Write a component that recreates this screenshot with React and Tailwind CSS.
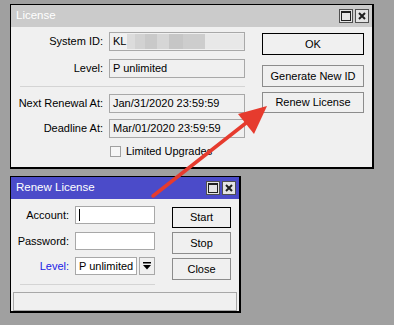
import React from 'react';

const font = { fontFamily: '"Liberation Sans", Arial, sans-serif' };

const TitleButtons = () => (
  <div className="flex gap-[2px]">
    <div className="w-[14px] h-[14px] bg-[#e4e4e4] border border-[#505050] flex items-center justify-center">
      <div className="w-[10px] h-[10px] border border-t-2 border-[#202020]" />
    </div>
    <div className="w-[14px] h-[14px] bg-[#e4e4e4] border border-[#505050] flex items-center justify-center">
      <svg width="8" height="8" viewBox="0 0 8 8">
        <path d="M1 1 L7 7 M7 1 L1 7" stroke="#202020" strokeWidth="2" />
      </svg>
    </div>
  </div>
);

const Field = ({ children, w = 'w-[136px]', h = 'h-[19px]', white }) => (
  <div className={`${w} ${h} border border-[#a8a8a8] ${white ? 'bg-white' : 'bg-[#f0f0f0]'} flex items-center px-[3px] text-[11px] text-black overflow-hidden whitespace-nowrap`}>
    {children}
  </div>
);

const Button = ({ children, def, h = 'h-[22px]', w = 'w-[102px]' }) => (
  <div className={`${w} ${h} border ${def ? 'border-black' : 'border-[#8c8c8c]'} bg-[#f0f0f0] flex items-center justify-center text-[11px] text-black`}>
    {children}
  </div>
);

const Row = ({ label, children, labelW = 'w-[98px]', blue }) => (
  <div className="flex items-center">
    <div className={`${labelW} text-right text-[11px] pr-[6px] whitespace-nowrap ${blue ? 'text-[#1a1ae6]' : 'text-black'}`}>{label}</div>
    {children}
  </div>
);

export default function App() {
  return (
    <div className="relative w-[394px] h-[325px] bg-[#a0a0a0] overflow-hidden" style={font}>
      {/* License window */}
      <div className="absolute left-[10px] top-[4px] w-[364px] h-[165px] border border-black border-r-2 border-b-2 bg-[#f0f0f0] flex flex-col">
        <div className="h-[22px] bg-[#cbcbcb] flex items-center justify-between pl-[5px] pr-[3px]">
          <span className="text-white text-[11.5px]">License</span>
          <TitleButtons />
        </div>
        <div className="flex pt-[5px]">
          <div className="flex flex-col">
            <Row label="System ID:">
              <Field>
                <span>KL</span>
                <span className="ml-[1px] flex h-[15px]">
                  <span className="w-[8px] bg-[#dcdcdc]" />
                  <span className="w-[10px] bg-[#d2d2d2]" />
                  <span className="w-[12px] bg-[#c9c9c9]" />
                  <span className="w-[12px] bg-[#d6d6d6]" />
                  <span className="w-[14px] bg-[#c6c6c6]" />
                  <span className="w-[22px] bg-[#cdcdcd]" />
                  <span className="w-[40px] bg-[#e8e8e8]" />
                </span>
              </Field>
            </Row>
            <div className="mt-[8px]">
              <Row label="Level:">
                <Field>P unlimited</Field>
              </Row>
            </div>
            <div className="mt-[8px] ml-[9px] w-[225px] h-[1px] bg-[#d4d4d4]" />
            <div className="mt-[7px]">
              <Row label="Next Renewal At:">
                <Field>Jan/31/2020 23:59:59</Field>
              </Row>
            </div>
            <div className="mt-[6px]">
              <Row label="Deadline At:">
                <Field>Mar/01/2020 23:59:59</Field>
              </Row>
            </div>
            <div className="mt-[5px] ml-[99px] flex items-center gap-[5px]">
              <div className="w-[11px] h-[11px] border border-[#a0a0a0] bg-[#f6f6f6]" />
              <span className="text-[11px] text-black">Limited Upgrades</span>
            </div>
          </div>
          <div className="ml-[17px] flex flex-col pt-[1px]">
            <Button def>OK</Button>
            <div className="mt-[10px]">
              <Button>Generate New ID</Button>
            </div>
            <div className="mt-[5px]">
              <Button h="h-[21px]">Renew License</Button>
            </div>
          </div>
        </div>
      </div>

      {/* Renew License window */}
      <div className="absolute left-[10px] top-[176px] w-[231px] h-[137px] border border-black border-r-2 border-b-2 bg-[#f0f0f0] flex flex-col">
        <div className="h-[22px] bg-[#4b4bc9] flex items-center justify-between pl-[5px] pr-[3px]">
          <span className="text-white text-[11.5px]">Renew License</span>
          <TitleButtons />
        </div>
        <div className="flex pt-[7px]">
          <div className="flex flex-col">
            <Row label="Account:" labelW="w-[64px]">
              <Field w="w-[80px]" h="h-[18px]" white>
                <span className="w-[1px] h-[12px] bg-black" />
              </Field>
            </Row>
            <div className="mt-[8px]">
              <Row label="Password:" labelW="w-[64px]">
                <Field w="w-[80px]" h="h-[18px]" white />
              </Row>
            </div>
            <div className="mt-[7px]">
              <Row label="Level:" labelW="w-[64px]" blue>
                <Field w="w-[62px]" h="h-[18px]" white>P unlimited</Field>
                <div className="ml-[2px] w-[16px] h-[18px] border border-[#a8a8a8] bg-[#f0f0f0] flex items-center justify-center">
                  <svg width="8" height="8" viewBox="0 0 8 8">
                    <rect x="0" y="0" width="8" height="1.5" fill="#000" />
                    <path d="M0 3 L8 3 L4 7.5 Z" fill="#000" />
                  </svg>
                </div>
              </Row>
            </div>
            <div className="mt-[9px] ml-[9px] w-[135px] h-[1px] bg-[#d4d4d4]" />
          </div>
          <div className="ml-[17px] flex flex-col pt-[1px]">
            <Button def w="w-[59px]" h="h-[21px]">Start</Button>
            <div className="mt-[4px]">
              <Button w="w-[59px]">Stop</Button>
            </div>
            <div className="mt-[4px]">
              <Button w="w-[59px]">Close</Button>
            </div>
          </div>
        </div>
        <div className="mt-[7px] mx-[2px] h-[19px] border border-[#a8a8a8] bg-[#f0f0f0]" />
      </div>

      {/* annotation arrow */}
      <svg className="absolute left-0 top-0 pointer-events-none" width="394" height="325" viewBox="0 0 394 325">
        <line x1="153" y1="196" x2="246" y2="123" stroke="#e63b2e" strokeWidth="3.5" strokeLinecap="round" />
        <path d="M267 106 L238 114 L254 134 Z" fill="#e63b2e" />
      </svg>
    </div>
  );
}
